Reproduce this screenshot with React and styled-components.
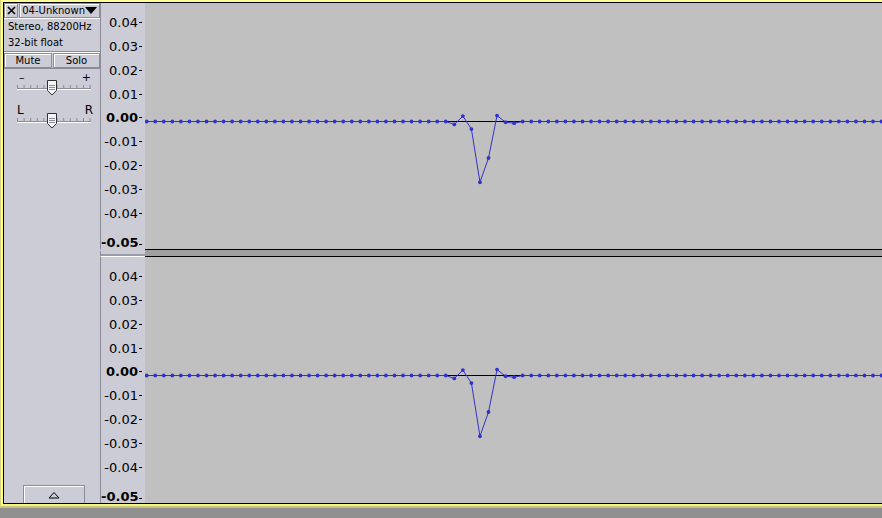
import React from 'react';
import styled, { createGlobalStyle } from 'styled-components';

const GlobalStyle = createGlobalStyle`
  html, body {
    margin: 0;
    padding: 0;
    background: #909090;
  }
  body {
    width: 882px;
    height: 518px;
    overflow: hidden;
    font-family: "DejaVu Sans", Verdana, sans-serif;
  }
`;

const LAVENDER = '#ccccd6';
const WAVE_BG = '#c0c0c0';
const BLUE = '#3232c8';

const Page = styled.div`
  width: 882px;
  height: 518px;
  background: #909090;
`;

const OuterFrame = styled.div`
  border-left: 1px solid #d4d47a;
  border-bottom: 2px solid #c4c47c;
`;

const YellowFrame = styled.div`
  border-top: 2px solid #ffff96;
  border-left: 2px solid #ffff80;
  border-bottom: 2px solid #f6f67e;
`;

const Track = styled.div`
  display: flex;
  height: 500px;
  border-top: 1px solid #000;
  border-left: 1px solid #000;
  border-bottom: 1px solid #000;
  background: ${LAVENDER};
`;

/* ---------- control panel ---------- */

const Panel = styled.div`
  width: 96px;
  flex-shrink: 0;
  display: flex;
  flex-direction: column;
  background: ${LAVENDER};
  font-size: 10px;
  color: #000;
  white-space: nowrap;
`;

const TitleRow = styled.div`
  display: flex;
  gap: 1px;
  height: 15px;
  border-bottom: 1px solid #ffffff;
`;

const BevelBox = styled.div`
  box-sizing: border-box;
  height: 15px;
  border: 1px solid #8c8c98;
  box-shadow: inset 1px 1px 0 #ffffff;
  display: flex;
  align-items: center;
`;

const CloseBox = styled(BevelBox)`
  width: 16px;
  justify-content: center;
`;

const TitleBox = styled(BevelBox)`
  flex: 1;
  justify-content: space-between;
  padding: 0 2px 0 2px;
`;

const DownArrow = styled.span`
  width: 0;
  height: 0;
  border-left: 6px solid transparent;
  border-right: 6px solid transparent;
  border-top: 7px solid #000;
`;

const Info = styled.div`
  padding: 0 4px;
  line-height: 16px;
  height: 32px;
  border-bottom: 1px solid #8c8c98;
`;

const ButtonRow = styled.div`
  display: flex;
  gap: 1px;
  height: 15px;
  border-bottom: 1px solid #8c8c98;
  border-top: 1px solid #ffffff;
`;

const ToggleButton = styled(BevelBox)`
  width: ${(p) => p.w}px;
  justify-content: center;
`;

const SliderBlock = styled.div`
  margin: ${(p) => p.top}px 0 0 12px;
  width: 78px;
`;

const SliderLabels = styled.div`
  display: flex;
  justify-content: space-between;
  padding: 0 ${(p) => p.pad}px;
  height: 11px;
  font-size: ${(p) => p.size}px;
  line-height: 11px;
  margin-bottom: -4px;
`;

const Spacer = styled.div`
  flex: 1;
`;

const CollapseButton = styled(BevelBox)`
  width: 62px;
  height: 18px;
  margin: 0 0 0 19px;
  justify-content: center;
  border-bottom: none;
`;

const Slider = () => (
  <svg width="78" height="17" viewBox="0 0 78 17">
    <line x1="1" y1="9.5" x2="75" y2="9.5" stroke="#8c8c98" />
    <line x1="1" y1="10.5" x2="75" y2="10.5" stroke="#ffffff" />
    {Array.from({ length: 12 }, (_, i) => (
      <line key={i} x1={1.5 + i * 6.6} y1="6" x2={1.5 + i * 6.6} y2="9" stroke="#8c8c98" />
    ))}
    <path d="M31.5 1.5 h9 v10 l-4.5 4.5 l-4.5 -4.5 z" fill="#f4f4f8" stroke="#303030" />
    <line x1="33" y1="6.5" x2="39" y2="6.5" stroke="#8c8c98" />
    <line x1="33" y1="8.5" x2="39" y2="8.5" stroke="#8c8c98" />
    <line x1="33" y1="10.5" x2="39" y2="10.5" stroke="#8c8c98" />
  </svg>
);

/* ---------- channels ---------- */

const Channels = styled.div`
  flex: 1;
  display: flex;
  flex-direction: column;
`;

const ChannelRow = styled.div`
  display: flex;
  height: 246px;
`;

const Ruler = styled.div`
  width: 45px;
  flex-shrink: 0;
  box-sizing: border-box;
  border-left: 1px solid #8c8c98;
  padding-top: 7.75px;
  background: ${LAVENDER};
  display: flex;
  flex-direction: column;
`;

const Tick = styled.div`
  height: 24.5px;
  display: flex;
  align-items: ${(p) => (p.last ? 'flex-end' : 'center')};
  justify-content: flex-end;
  font-size: 13px;
  font-weight: ${(p) => (p.bold ? 'bold' : 'normal')};
  color: #000;
  padding-right: 3px;
  &::after {
    content: '';
    width: 3px;
    height: 1px;
    margin-left: 1px;
    background: #000;
    ${(p) => (p.last ? 'margin-bottom: 4px;' : '')}
  }
`;

const TickLabel = styled.span`
  ${(p) => (p.last ? 'margin-bottom: -1px; line-height: 14px;' : '')}
`;

const Wave = styled.div`
  flex: 1;
  background: ${WAVE_BG};
  overflow: hidden;
`;

const SeparatorRow = styled.div`
  display: flex;
  height: 8px;
`;

const RulerGap = styled.div`
  width: 45px;
  box-sizing: border-box;
  border-left: 1px solid #8c8c98;
  border-top: 4px solid ${LAVENDER};
  border-bottom: 1px solid #ffffff;
  background: #9c9ca8;
  box-shadow: inset 0 1px 0 ${LAVENDER};
`;

const WaveGap = styled.div`
  flex: 1;
  border-top: 1px solid #000;
  border-bottom: 1px solid #000;
  background: #a0a0a0;
`;

const TICKS = ['0.04', '0.03', '0.02', '0.01', '0.00', '-0.01', '-0.02', '-0.03', '-0.04', '-0.05'];

const SAMPLES = (() => {
  const v = Array(87).fill(0);
  v[36] = -0.0012;
  v[37] = 0.0022;
  v[38] = -0.0031;
  v[39] = -0.0248;
  v[40] = -0.0149;
  v[41] = 0.0024;
  v[42] = -0.0003;
  v[43] = -0.0007;
  return v;
})();

const Waveform = () => {
  const zero = 118;
  const pts = SAMPLES.map((s, i) => [1.7 + i * 8.545, zero - s * 2450]);
  return (
    <svg width="737" height="246" viewBox="0 0 737 246">
      <line x1="0" y1={zero + 0.5} x2="737" y2={zero + 0.5} stroke="#000" />
      <polyline
        points={pts.map(([x, y]) => `${x},${y + 0.5}`).join(' ')}
        fill="none"
        stroke={BLUE}
        strokeWidth="1"
      />
      {pts.map(([x, y], i) => (
        <circle key={i} cx={x} cy={y + 0.5} r="1.9" fill={BLUE} />
      ))}
    </svg>
  );
};

const Channel = () => (
  <ChannelRow>
    <Ruler>
      {TICKS.map((t, i) => (
        <Tick key={t} bold={t === '0.00' || t === '-0.05'} last={i === TICKS.length - 1}>
          <TickLabel last={i === TICKS.length - 1}>{t}</TickLabel>
        </Tick>
      ))}
    </Ruler>
    <Wave>
      <Waveform />
    </Wave>
  </ChannelRow>
);

export default function App() {
  return (
    <Page>
      <GlobalStyle />
      <OuterFrame>
        <YellowFrame>
          <Track>
            <Panel>
              <TitleRow>
                <CloseBox>
                  <svg width="9" height="9" viewBox="0 0 9 9">
                    <path d="M1 1 L8 8 M8 1 L1 8" stroke="#000" strokeWidth="1.6" />
                  </svg>
                </CloseBox>
                <TitleBox>
                  <span>04-Unknown</span>
                  <DownArrow />
                </TitleBox>
              </TitleRow>
              <Info>
                <div>Stereo, 88200Hz</div>
                <div>32-bit float</div>
              </Info>
              <ButtonRow>
                <ToggleButton w={48}>Mute</ToggleButton>
                <ToggleButton w={47}>Solo</ToggleButton>
              </ButtonRow>
              <SliderBlock top={3}>
                <SliderLabels size={11} pad={3}>
                  <span>–</span>
                  <span>+</span>
                </SliderLabels>
                <Slider />
              </SliderBlock>
              <SliderBlock top={7}>
                <SliderLabels size={12} pad={1}>
                  <span>L</span>
                  <span>R</span>
                </SliderLabels>
                <Slider />
              </SliderBlock>
              <Spacer />
              <CollapseButton>
                <svg width="12" height="8" viewBox="0 0 12 8">
                  <path d="M1 7 L6 1.5 L11 7 Z" fill="none" stroke="#000" />
                </svg>
              </CollapseButton>
            </Panel>
            <Channels>
              <Channel />
              <SeparatorRow>
                <RulerGap />
                <WaveGap />
              </SeparatorRow>
              <Channel />
            </Channels>
          </Track>
        </YellowFrame>
      </OuterFrame>
    </Page>
  );
}
